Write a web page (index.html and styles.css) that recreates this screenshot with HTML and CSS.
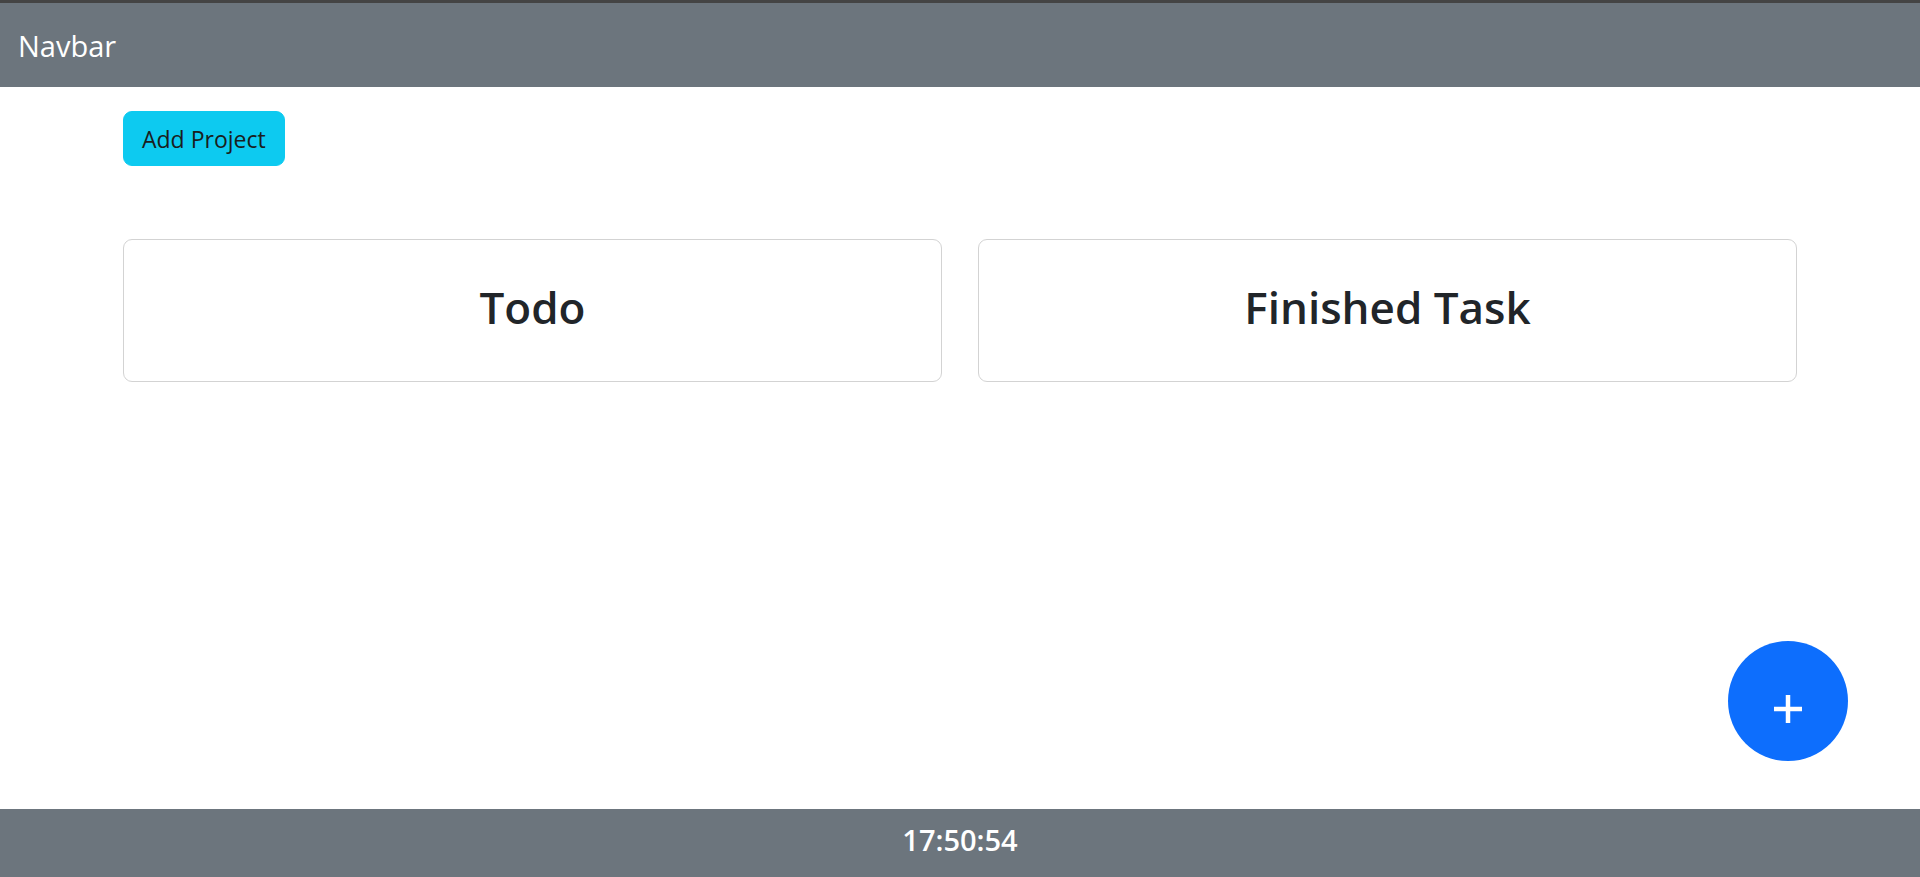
FILE: index.html
```html
<!DOCTYPE html>
<html lang="en">
<head>
<meta charset="utf-8">
<title>Todo</title>
<link rel="stylesheet" href="styles.css">
</head>
<body>
<div class="topline"></div>
<nav class="navbar">
  <div class="container-fluid">
    <span class="brand">Navbar</span>
  </div>
</nav>
<main class="container">
  <button class="add-btn" type="button">Add Project</button>
  <div class="board">
    <div class="card"><h2 class="card-title">Todo</h2></div>
    <div class="card"><h2 class="card-title">Finished Task</h2></div>
  </div>
</main>
<button class="fab" type="button" aria-label="Add">
  <svg width="28" height="28" viewBox="0 0 28 28"><rect x="11.75" y="0" width="4.5" height="28" fill="#fff"/><rect x="0" y="11.75" width="28" height="4.5" fill="#fff"/></svg>
</button>
<footer class="footer">17:50:54</footer>
</body>
</html>
```
FILE: styles.css
```css
* { box-sizing: border-box; }
html, body { height: 100%; }
body {
  margin: 0;
  font-family: "Open Sans", "Noto Sans", sans-serif;
  color: #212529;
  background: #fff;
  display: flex;
  flex-direction: column;
}
.topline { height: 3px; background: #444; flex: none; }
.navbar { background: #6c757d; padding: 12px 0; flex: none; }
.container-fluid { padding: 0 18px; }
.brand {
  display: block;
  color: #fff;
  font-size: 29px;
  line-height: 45px;
  padding: 7.5px 0;
}
.container {
  flex: 1;
  width: 1710px;
  margin: 0 auto;
  padding: 24px 18px 0;
}
.add-btn {
  font-family: inherit;
  font-size: 23px;
  line-height: 36px;
  padding: 8.5px 18px;
  background: #0dcaf0;
  border: 1px solid #0dcaf0;
  border-radius: 9px;
  color: #1a1d20;
  cursor: pointer;
}
.board {
  margin-top: 73px;
  display: grid;
  grid-template-columns: 1fr 1fr;
  gap: 36px;
}
.card {
  height: 143px;
  border: 1px solid #d3d3d3;
  border-radius: 9px;
  display: flex;
  justify-content: center;
  align-items: center;
}
.card-title {
  margin: 0 0 6px;
  font-size: 44px;
  font-weight: 600;
  line-height: 1.2;
}
.fab {
  position: fixed;
  right: 72px;
  bottom: 116px;
  width: 120px;
  height: 120px;
  border-radius: 50%;
  border: none;
  background: #0d6efd;
  display: flex;
  align-items: center;
  justify-content: center;
  padding: 16px 0 0;
  cursor: pointer;
}
.fab svg { display: block; }
.footer {
  flex: none;
  height: 68px;
  background: #6c757d;
  color: #fff;
  text-align: center;
  font-size: 29px;
  font-weight: 600;
  line-height: 62px;
}
```
